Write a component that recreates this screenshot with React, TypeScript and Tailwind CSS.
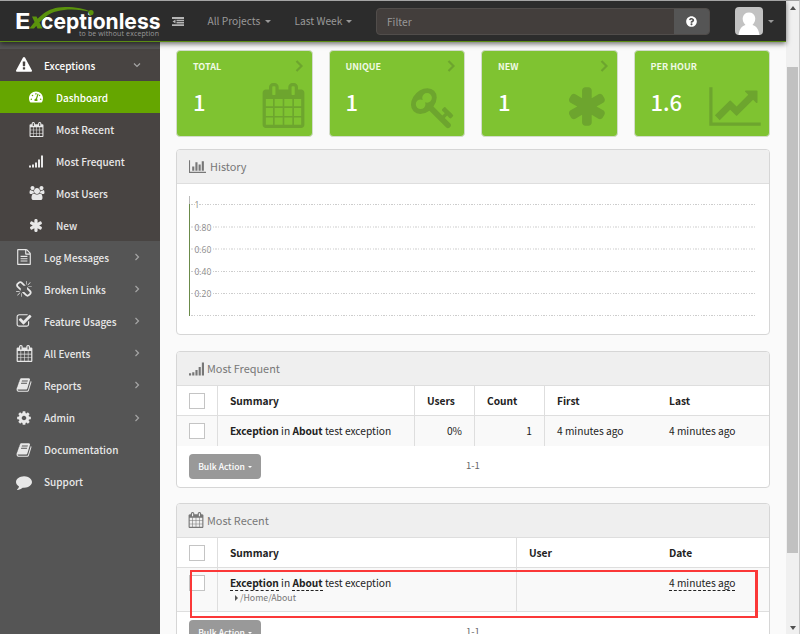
import React from "react";
import { FaTachometerAlt, FaQuestionCircle } from "react-icons/fa";

const PATHS = {
  asterisk:
    "M1482 1050q46 26 59.5 77.5t-12.5 97.5l-64 110q-26 46-77.5 59.5t-97.5-12.5l-266-153v307q0 52-38 90t-90 38h-128q-52 0-90-38t-38-90v-307l-266 153q-46 26-97.5 12.5t-77.5-59.5l-64-110q-26-46-12.5-97.5t59.5-77.5l266-154-266-154q-46-26-59.5-77.5t12.5-97.5l64-110q26-46 77.5-59.5t97.5 12.5l266 153v-307q0-52 38-90t90-38h128q52 0 90 38t38 90v307l266-153q46-26 97.5-12.5t77.5 59.5l64 110q26 46 12.5 97.5t-59.5 77.5l-266 154z",
  calendar:
    "M192 1664h288v-288h-288v288zm352 0h320v-288h-320v288zm-352-352h288v-320h-288v320zm352 0h320v-320h-320v320zm-352-384h288v-288h-288v288zm736 736h320v-288h-320v288zm-384-736h320v-288h-320v288zm768 736h288v-288h-288v288zm-384-352h320v-320h-320v320zm-352-864v-288q0-13-9.5-22.5t-22.5-9.5h-64q-13 0-22.5 9.5t-9.5 22.5v288q0 13 9.5 22.5t22.5 9.5h64q13 0 22.5-9.5t9.5-22.5zm736 864h288v-320h-288v320zm-384-384h320v-288h-320v288zm384 0h288v-288h-288v288zm32-480v-288q0-13-9.5-22.5t-22.5-9.5h-64q-13 0-22.5 9.5t-9.5 22.5v288q0 13 9.5 22.5t22.5 9.5h64q13 0 22.5-9.5t9.5-22.5zm384-64v1280q0 52-38 90t-90 38h-1408q-52 0-90-38t-38-90v-1280q0-52 38-90t90-38h128v-96q0-66 47-113t113-47h64q66 0 113 47t47 113v96h384v-96q0-66 47-113t113-47h64q66 0 113 47t47 113v96h128q52 0 90 38t38 90z",
  line:
    "M2048 1536v128h-2048v-1536h128v1408h1920zm-128-1248v435q0 21-19.5 29.5t-35.5-7.5l-121-121-633 633q-10 10-23 10t-23-10l-233-233-416 416-192-192 585-585q10-10 23-10t23 10l233 233 464-464-121-121q-16-16-7.5-35.5t29.5-19.5h435q14 0 23 9t9 23z",
  bars:
    "M640 896v512h-256v-512h256zm384-512v1024h-256v-1024h256zm1024 1152v128h-2048v-1536h128v1408h1920zm-640-896v768h-256v-768h256zm384-384v1152h-256v-1152h256z",
  signal:
    "M0 1472h256v256h-256zM384 1344h256v384h-256zM768 1088h256v640h-256zM1152 704h256v1024h-256zM1536 192h256v1536h-256z",
  key:
    "M832 512q0-80-56-136t-136-56-136 56-56 136q0 42 19 83-41-19-83-19-80 0-136 56t-56 136 56 136 136 56 136-56 56-136q0-42-19-83 41 19 83 19 80 0 136-56t56-136zm851 704q0 17-49 66t-66 49q-9 0-28.5-16t-36.5-33-38.5-40-24.5-26l-96 96 220 220q28 28 28 68 0 42-39 81t-81 39q-40 0-68-28l-671-671q-176 131-365 131-163 0-265.5-102.5t-102.5-265.5q0-160 95-313t248-248 313-95q163 0 265.5 102.5t102.5 265.5q0 189-131 365l355 355 96-96q-3-3-26-24.5t-40-38.5-33-36.5-16-28.5q0-17 49-66t66-49q13 0 23 10 6 6 46 44.5t82 79.5 86.5 86 73 78 28.5 41z",
  warning:
    "M1024 1375v-190q0-14-9.5-23.5t-22.5-9.5h-192q-13 0-22.5 9.5t-9.5 23.5v190q0 14 9.5 23.5t22.5 9.5h192q13 0 22.5-9.5t9.5-23.5zm-2-374l18-459q0-12-10-19-13-11-24-11h-220q-11 0-24 11-10 7-10 21l17 457q0 10 10 16.5t24 6.5h185q14 0 23.5-6.5t10.5-16.5zm-14-934l768 1408q35 63-2 126-17 29-46.5 46t-63.5 17h-1536q-34 0-63.5-17t-46.5-46q-37-63-2-126l768-1408q17-31 47-49t65-18 65 18 47 49z",
  file:
    "M1596 380q28 28 48 76t20 88v1152q0 40-28 68t-68 28h-1344q-40 0-68-28t-28-68v-1600q0-40 28-68t68-28h896q40 0 88 20t76 48zm-444-244v376h376q-10-29-22-41l-313-313q-12-12-41-22zm384 1528v-1024h-416q-40 0-68-28t-28-68v-416h-768v1536h1280zM512 768h768v128h-768zM512 1024h768v128h-768zM512 1280h768v128h-768z",
  book:
    "M1703 478q40 57 18 129l-275 906q-19 64-76.5 107.5t-122.5 43.5h-923q-77 0-148.5-53.5t-99.5-131.5q-24-67-2-127 0-4 3-27t4-37q1-8-3-21.5t-3-19.5q2-11 8-21t16.5-23.5 16.5-23.5q23-38 45-91.5t30-91.5q3-10 .5-30t-.5-28q3-11 17-28t17-23q21-36 42-92t25-90q1-9-2.5-32t.5-28q4-13 22-30.5t22-22.5q19-26 42.5-84.5t27.5-96.5q1-8-3-25.5t-2-26.5q2-8 9-18t18-23 17-21q8-12 16.5-30.5t15-35 16-36 19.5-32 26.5-23.5 36-11.5 47.5 5.5l-1 3q38-9 51-9h761q74 0 114 56t18 130l-274 906q-36 119-71.5 153.5t-128.5 34.5h-869q-27 0-38 15-11 16-1 43 24 70 144 70h923q29 0 56-15.5t35-41.5l300-987q7-22 5-57 38 15 59 43zm-1064 2q-4 13 2 22.5t20 9.5h608q13 0 25.5-9.5t16.5-22.5l21-64q4-13-2-22.5t-20-9.5h-608q-13 0-25.5 9.5t-16.5 22.5zm-83 256q-4 13 2 22.5t20 9.5h608q13 0 25.5-9.5t16.5-22.5l21-64q4-13-2-22.5t-20-9.5h-608q-13 0-25.5 9.5t-16.5 22.5z",
  cog:
    "M1152 896q0-106-75-181t-181-75-181 75-75 181 75 181 181 75 181-75 75-181zm512-109v222q0 12-8 23t-20 13l-185 28q-19 54-39 91 35 50 107 138 10 12 10 25t-9 23q-27 37-99 108t-94 71q-12 0-26-9l-138-108q-44 23-91 38-16 136-29 186-7 28-36 28h-222q-14 0-24.5-8.5t-11.5-21.5l-28-184q-49-16-90-37l-141 107q-10 9-25 9-14 0-25-11-126-114-165-168-7-10-7-23 0-12 8-23 15-21 51-66.5t54-70.5q-27-50-41-99l-183-27q-13-2-21-12.5t-8-23.5v-222q0-12 8-23t19-13l186-28q14-46 39-92-40-57-107-138-10-12-10-24 0-10 9-23 26-36 98.5-107.5t94.5-71.5q13 0 26 10l138 107q44-23 91-38 16-136 29-186 7-28 36-28h222q14 0 24.5 8.5t11.5 21.5l28 184q49 16 90 37l142-107q9-9 24-9 13 0 25 10 129 119 165 170 7 8 7 22 0 12-8 23-15 21-51 66.5t-54 70.5q26 50 41 98l183 28q13 2 21 12.5t8 23.5z",
  comment:
    "M1792 896q0 174-120 321.5t-326 233-450 85.5q-70 0-145-8-198 175-460 242-49 14-114 22-17 2-30.5-9t-17.5-29v-1q-3-4-.5-12t2-10 4.5-9.5l6-9 7-8.5 8-9q7-8 31-34.5t34.5-38 31-39.5 32.5-51 27-59 26-76q-157-89-247.5-220t-90.5-281q0-130 71-248.5t191-204.5 286-136.5 348-50.5q244 0 450 85.5t326 233 120 321.5z",
  check:
    "M1472 930v318q0 119-84.5 203.5t-203.5 84.5h-832q-119 0-203.5-84.5t-84.5-203.5v-832q0-119 84.5-203.5t203.5-84.5h832q63 0 117 25 15 7 18 23 3 17-9 29l-49 49q-10 10-23 10-3 0-9-2-23-6-45-6h-832q-66 0-113 47t-47 113v832q0 66 47 113t113 47h832q66 0 113-47t47-113v-254q0-13 9-22l64-64q10-10 23-10 6 0 12 3 20 8 20 29zm231-489l-814 814q-24 24-57 24t-57-24l-430-430q-24-24-24-57t24-57l110-110q24-24 57-24t57 24l263 263 647-647q24-24 57-24t57 24l110 110q24 24 24 57t-24 57z",
  users:
    "M657 896q-162 5-265 128h-134q-82 0-138-40.5t-56-118.5q0-353 124-353 6 0 43.5 21t97.5 42.5 119 21.5q67 0 133-23-5 37-5 66 0 139 81 256zm1071 637q0 120-73 189.5t-194 69.500h-874q-121 0-194-69.500t-73-189.500q0-53 3.500-103.500t14-109 26.500-108.500 43-97.500 62-81 85.500-53.500 111.500-20q10 0 43 21.500t73 48 107 48 135 21.500 135-21.500 107-48 73-48 43-21.500q61 0 111.500 20t85.500 53.500 62 81 43 97.500 26.500 108.500 14 109 3.500 103.500zm-1024-1277q0 106-75 181t-181 75-181-75-75-181 75-181 181-75 181 75 75 181zm704 384q0 159-112.500 271.500t-271.500 112.500-271.500-112.500-112.500-271.500 112.500-271.500 271.500-112.500 271.500 112.500 112.500 271.500zm576 225q0 78-56 118.500t-138 40.500h-134q-103-123-265-128 81-117 81-256 0-29-5-66 66 23 133 23 59 0 119-21.500t97.500-42.500 43.500-21q124 0 124 353zm-128-609q0 106-75 181t-181 75-181-75-75-181 75-181 181-75 181 75 75 181z",
  broken:
    "M439 1271l-256 256q-11 9-23 9t-23-9q-9-10-9-23t9-23l256-256q10-9 23-9t23 9q9 10 9 23t-9 23zm169 41v320q0 14-9 23t-23 9-23-9-9-23v-320q0-14 9-23t23-9 23 9 9 23zm-224-224q0 14-9 23t-23 9h-320q-14 0-23-9t-9-23 9-23 23-9h320q14 0 23 9t9 23zm1264 128q0 120-85 203l-147 146q-83 83-203 83-121 0-204-85l-334-335q-21-21-42-56l239-18 273 274q28 28 68 27.500t68-27.500l147-146q28-28 28-67 0-40-28-68l-274-275 18-239q35 21 56 42l336 336q84 86 84 204zm-617-724l-239 18-273-274q-28-28-68-28-39 0-68 27l-147 146q-28 28-28 67 0 40 28 68l274 274-18 240q-35-21-56-42l-336-336q-84-86-84-204 0-120 85-203l147-146q83-83 203-83 121 0 204 85l334 335q21 21 42 56zm633 84q0 14-9 23t-23 9h-320q-14 0-23-9t-9-23 9-23 23-9h320q14 0 23 9t9 23zm-544-544v320q0 14-9 23t-23 9-23-9-9-23v-320q0-14 9-23t23-9 23 9 9 23zm407 151l-256 256q-11 9-23 9t-23-9q-9-10-9-23t9-23l256-256q10-9 23-9t23 9q9 10 9 23t-9 23z",
};

type IconName = keyof typeof PATHS;

function Icon({ name, className = "" }: { name: IconName; className?: string }) {
  const wide = name === "line" || name === "bars" || name === "users";
  return (
    <svg viewBox={wide ? "0 0 2048 1792" : "0 0 1792 1792"} className={"shrink-0 fill-current " + className}>
      <path d={PATHS[name]} />
    </svg>
  );
}

function Caret({ className = "" }: { className?: string }) {
  return (
    <span
      className={"inline-block h-0 w-0 border-x-[3px] border-t-[3px] border-x-transparent border-t-current " + className}
    />
  );
}

function Logo() {
  return (
    <svg viewBox="0 0 162 40" className="h-10 w-[162px] shrink-0">
      <g fontFamily="Inter, sans-serif" fontWeight="700" fontSize="21.500">
        <text x="15" y="27.500" fill="#fff" textLength="15.500" lengthAdjust="spacingAndGlyphs">E</text>
        <text x="41" y="27.500" fill="#fff" textLength="119.500" lengthAdjust="spacingAndGlyphs">ceptionless</text>
      </g>
      <path d="M32 15.500h4.500l6 12h-5zM29.500 27.500C38 17 46 6 65 6c11 0 20 1.500 26 5-16-4-35-3.500-45 4.500-5 4-8 7.500-12 12z" fill="#5a930c" />
      <circle cx="91" cy="11.600" r="2.600" fill="#5a930c" />
      <text x="79" y="34.500" fontFamily="Open Sans, sans-serif" fontSize="7" fill="#999" textLength="80">
        to be without exception
      </text>
    </svg>
  );
}

function Header() {
  return (
    <header className="relative z-10 flex h-[42px] shrink-0 items-center border-b border-t border-b-[#5b8c14] border-t-[#a5a5a5] bg-[#2c2c2c] text-[10.2px] text-[#999] shadow-[0_2px_5px_rgba(0,0,0,0.55)]">
      <Logo />
      <svg viewBox="0 0 12 9" className="ml-2.5 h-[9px] w-3 fill-[#b5b5b5]">
        <path d="M0 0h12v2H0zM4.500 2.800h7.500v1.500H4.500zM4.500 5h7.500v1.400H4.500zM0 7.200h12V9H0zM0.500 4.500l3-2v4z" />
      </svg>
      <span className="ml-[23.500px] w-[57px] whitespace-nowrap">All Projects</span>
      <Caret />
      <span className="ml-6 w-[51px] whitespace-nowrap">Last Week</span>
      <Caret />
      <div className="ml-[24.500px] flex h-[27px] w-[334px] overflow-hidden rounded border border-[#514d4b] bg-[#433e3c]">
        <span className="flex-1 pl-2.5 leading-[25px]">Filter</span>
        <span className="flex w-[35px] items-center justify-center bg-[#555] text-white">
          <FaQuestionCircle size={11} />
        </span>
      </div>
      <svg viewBox="0 0 28 28" className="ml-[25px] h-7 w-7 rounded-sm">
        <path d="M0 0h28v28H0z" fill="#c2c2c2" />
        <path d="M3.500 28c1-6 3-9 7-10-5-5-3-12.500 3.500-12.500S22.500 13 17.500 18c4 1 6 4 7 10z" fill="#fff" />
      </svg>
      <Caret className="ml-[5px]" />
    </header>
  );
}

const SUB: { label: string; icon: React.ReactNode }[] = [
  { label: "Dashboard", icon: <FaTachometerAlt size={14} /> },
  { label: "Most Recent", icon: <Icon name="calendar" className="h-[15px] w-[15px]" /> },
  { label: "Most Frequent", icon: <Icon name="signal" className="h-3.5 w-3.5" /> },
  { label: "Most Users", icon: <Icon name="users" className="h-3.5 w-4" /> },
  { label: "New", icon: <Icon name="asterisk" className="h-[15px] w-[15px]" /> },
];

const NAV: { label: string; icon: React.ReactNode; more: boolean }[] = [
  { label: "Log Messages", icon: <Icon name="file" className="h-4 w-4" />, more: true },
  { label: "Broken Links", icon: <Icon name="broken" className="h-[17px] w-[17px]" />, more: true },
  { label: "Feature Usages", icon: <Icon name="check" className="h-4 w-4" />, more: true },
  { label: "All Events", icon: <Icon name="calendar" className="h-[17px] w-[17px]" />, more: true },
  { label: "Reports", icon: <Icon name="book" className="h-4 w-4" />, more: true },
  { label: "Admin", icon: <Icon name="cog" className="h-4 w-4" />, more: true },
  { label: "Documentation", icon: <Icon name="book" className="h-4 w-4" />, more: false },
  { label: "Support", icon: <Icon name="comment" className="h-4 w-4" />, more: false },
];

function Chevron({ className = "" }: { className?: string }) {
  return (
    <svg viewBox="0 0 6 8" className={"h-2 w-1.5 fill-none stroke-[#a5a5a5] " + className}>
      <path d="M1.500 1l3 3-3 3" strokeWidth="1.200" />
    </svg>
  );
}

function Sidebar() {
  return (
    <aside className="w-40 shrink-0 bg-[#555] pt-[7px] text-[10px] font-medium text-[#e8e8e8]">
      <div className="bg-[#484442]">
        <div className="flex h-8 items-center pl-4 text-white">
          <Icon name="warning" className="h-4 w-4" />
          <span className="ml-3 flex-1">Exceptions</span>
          <Chevron className="mr-5 rotate-90" />
        </div>
        {SUB.map((s, i) => (
          <div key={s.label} className={"flex h-8 items-center pl-[29px] " + (i === 0 ? "bg-[#65a600] text-white" : "")}>
            <span className="flex w-[27px]">{s.icon}</span>
            <span>{s.label}</span>
          </div>
        ))}
      </div>
      {NAV.map((n) => (
        <div key={n.label} className="flex h-[32.1px] items-center pl-4">
          <span className="flex w-7">{n.icon}</span>
          <span className="flex-1">{n.label}</span>
          {n.more && <Chevron className="mr-5" />}
        </div>
      ))}
    </aside>
  );
}

const CARDS: { label: string; value: string; icon: IconName; cls: string; more: boolean }[] = [
  { label: "TOTAL", value: "1", icon: "calendar", cls: "h-[45px] w-[45px] right-1.5 bottom-2", more: true },
  { label: "UNIQUE", value: "1", icon: "key", cls: "h-[45px] w-[45px] right-[8px] bottom-[6px]", more: true },
  { label: "NEW", value: "1", icon: "asterisk", cls: "h-[45px] w-[45px] right-1.5 bottom-[7px]", more: true },
  { label: "PER HOUR", value: "1.6", icon: "line", cls: "h-[45px] w-[52px] right-2 bottom-[7px]", more: false },
];

function StatCard({ card }: { card: (typeof CARDS)[number] }) {
  return (
    <div className="relative h-[87px] rounded border border-[#d3dccb] bg-[#7fc331] pl-4 text-white">
      <div className="flex h-[30px] items-center justify-between pr-[9px] text-[9px] font-bold text-[#f0fae4]">
        <span className="pt-px">{card.label}</span>
        {card.more && (
          <svg viewBox="0 0 8 12" className="h-3 w-2 fill-none stroke-[#6da52e]">
            <path d="M1.500 1l5 5-5 5" strokeWidth="2.200" />
          </svg>
        )}
      </div>
      <div className="mt-[5px] text-[22px] font-medium leading-[30px]">{card.value}</div>
      <Icon name={card.icon} className={"absolute text-[#6da52e] " + card.cls} />
    </div>
  );
}

function Panel({ icon, title, children, className }: { icon: IconName; title: string; children: React.ReactNode; className: string }) {
  const size = {
    bars: "mr-1 h-[15px] w-[17px]",
    calendar: "-ml-px mr-[3px] mb-0.5 h-4 w-4",
  }[icon as string] ?? "mb-px mr-[3px] h-[15px] w-[15px]";
  return (
    <section className={"shrink-0 overflow-hidden rounded border border-[#d6d6d6] bg-white " + className}>
      <div className="flex h-[34px] items-center border-b border-[#dedede] bg-[#efefef] pl-3 text-[10.9px] text-[#777]">
        <Icon name={icon} className={size} />
        {title}
      </div>
      {children}
    </section>
  );
}

const TICKS = [
  { y: 20.5, label: "1" },
  { y: 43, label: "0.80" },
  { y: 65, label: "0.60" },
  { y: 87.5, label: "0.40" },
  { y: 109.5, label: "0.20" },
  { y: 131.5, label: "" },
];

function Chart() {
  return (
    <svg viewBox="0 0 592 150" className="h-[150px] w-[592px]">
      {TICKS.map((t) => (
        <g key={t.y}>
          <text x="17.500" y={t.y + 3.5} fontSize="8.500" fill="#888" fontFamily="Open Sans, sans-serif">{t.label}</text>
          <path d={`M12 ${t.y}H580`} stroke="#cdcdcd" strokeDasharray="1 1 2 1 1 2" />
        </g>
      ))}
      <path d="M12.500 12v10" stroke="#bbb" />
      <path d="M12.500 20v112" stroke="#6b8b4a" />
    </svg>
  );
}

function Box() {
  return <span className="block h-4 w-4 border border-[#c4c4c4] bg-white" />;
}

function Footer() {
  return (
    <div className="flex h-10 items-start pl-3 pt-2">
      <span className="flex h-[25px] w-[72px] items-center justify-center gap-[3px] rounded bg-[#999] text-[8.6px] font-medium text-white">
        Bulk Action <Caret className="!border-x-[2.5px] !border-t-[2.5px]" />
      </span>
      <span className="ml-[205px] mt-1 text-[9.5px] text-[#666]">1-1</span>
    </div>
  );
}

const CELL = "flex items-center border-[#dedede]";

function FrequentTable() {
  return (
    <div className="text-[10.2px] text-[#222]">
      <div className="flex h-[30px] border-b border-[#dedede] font-bold">
        <div className={CELL + " w-[41px] border-r pl-3"}><Box /></div>
        <div className={CELL + " w-[197px] border-r pl-3"}>Summary</div>
        <div className={CELL + " w-[60px] border-r pl-3"}>Users</div>
        <div className={CELL + " w-[70px] border-r pl-3"}>Count</div>
        <div className={CELL + " w-[112px] pl-3"}>First</div>
        <div className={CELL + " pl-3"}>Last</div>
      </div>
      <div className="flex h-[30px] bg-[#f9f9f9]">
        <div className={CELL + " w-[41px] border-r pl-3"}><Box /></div>
        <div className={CELL + " w-[197px] whitespace-pre border-r pl-3"}><b>Exception</b> in <b>About</b> test exception</div>
        <div className={CELL + " w-[60px] justify-end border-r pr-3"}>0%</div>
        <div className={CELL + " w-[70px] justify-end border-r pr-3"}>1</div>
        <div className={CELL + " w-[112px] pl-3"}>4 minutes ago</div>
        <div className={CELL + " pl-3"}>4 minutes ago</div>
      </div>
    </div>
  );
}

const DOTTED = "border-b border-dashed border-[#222] leading-[14px]";

function RecentTable() {
  return (
    <div className="text-[10.2px] text-[#222]">
      <div className="flex h-[30px] border-b border-[#dedede] font-bold">
        <div className={CELL + " w-[41px] border-r pl-3"}><Box /></div>
        <div className={CELL + " w-[299px] border-r pl-3"}>Summary</div>
        <div className={CELL + " w-[140px] pl-3"}>User</div>
        <div className={CELL + " pl-3"}>Date</div>
      </div>
      <div className="flex h-11 border-b border-[#dedede] bg-[#f9f9f9]">
        <div className="w-[41px] border-r border-[#dedede] pl-3 pt-[7px]"><Box /></div>
        <div className="w-[299px] border-r border-[#dedede] pl-3 pt-2">
          <div className="flex h-[15px] whitespace-pre leading-[14px]">
            <b className={DOTTED}>Exception</b> in <b className={DOTTED}>About</b> test exception
          </div>
          <div className="flex items-center pl-[5px] text-[8.8px] leading-[14px] text-[#777]">
            <span className="mr-0.5 h-0 w-0 border-y-[3px] border-l-[3px] border-y-transparent border-l-[#555]" />
            /Home/About
          </div>
        </div>
        <div className="w-[140px]" />
        <div className="pl-3 pt-2"><span className={"block " + DOTTED}>4 minutes ago</span></div>
      </div>
    </div>
  );
}

function Scrollbar() {
  return (
    <div className="flex w-3.5 shrink-0 flex-col items-center border-r border-t border-r-[#c8c8c8] border-t-[#a5a5a5] bg-[#f0f0f0]">
      <span className="mt-[5px] border-x-[3px] border-b-4 border-x-transparent border-b-[#505050]" />
      <span className="mt-[57px] h-[486px] w-[11px] bg-[#c1c1c1]" />
      <span className="mt-auto mb-1 border-x-[3px] border-t-4 border-x-transparent border-t-[#505050]" />
    </div>
  );
}

export default function App() {
  return (
    <div className="relative flex h-[634px] w-[800px] overflow-hidden bg-[#fafafa] font-['Noto_Sans_CJK_SC',sans-serif]">
      <div className="flex w-[786px] flex-col">
        <Header />
        <div className="flex min-h-0 flex-1">
          <Sidebar />
          <main className="flex min-w-0 flex-1 flex-col overflow-hidden px-4 pt-2">
            <div className="grid shrink-0 grid-cols-4 gap-4">
              {CARDS.map((c) => <StatCard key={c.label} card={c} />)}
            </div>
            <Panel icon="bars" title="History" className="mt-3 h-[186px]"><Chart /></Panel>
            <Panel icon="signal" title="Most Frequent" className="mt-4 h-[137px]">
              <FrequentTable />
              <Footer />
            </Panel>
            <Panel icon="calendar" title="Most Recent" className="mt-[15px] h-[152px]">
              <RecentTable />
              <Footer />
            </Panel>
          </main>
        </div>
      </div>
      <Scrollbar />
      <div className="absolute left-[190px] top-[570px] h-12 w-[568px] border-2 border-r-[3px] border-[#fb3838]" />
    </div>
  );
}
